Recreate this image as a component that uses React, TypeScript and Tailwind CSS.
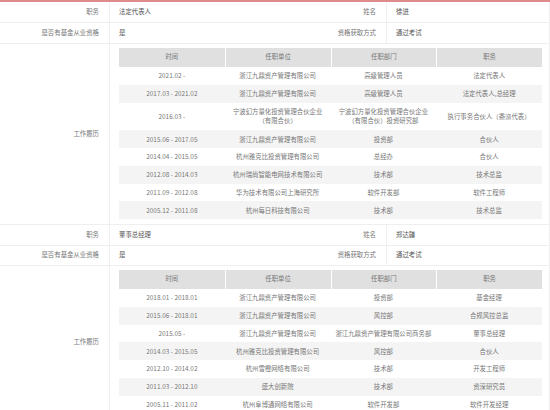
import React from "react";

type Row = { t: React.ReactNode; c: React.ReactNode; d: React.ReactNode; p: React.ReactNode; tall?: boolean };

const sec1: Row[] = [
  { t: "2021.02 -", c: "浙江九鼎资产管理有限公司", d: "高级管理人员", p: "法定代表人" },
  { t: "2017.03 - 2021.02", c: "浙江九鼎资产管理有限公司", d: "高级管理人员", p: "法定代表人,总经理" },
  {
    t: "2016.03 -",
    c: (<>宁波幻方量化投资管理合伙企业<br />（有限合伙）</>),
    d: (<>宁波幻方量化投资管理合伙企业<br />（有限合伙）投资研究部</>),
    p: "执行事务合伙人（委派代表）",
    tall: true,
  },
  { t: "2015.06 - 2017.05", c: "浙江九鼎资产管理有限公司", d: "投资部", p: "合伙人" },
  { t: "2014.04 - 2015.05", c: "杭州雅克比投资管理有限公司", d: "总经办", p: "合伙人" },
  { t: "2012.08 - 2014.03", c: "杭州瑞尚智能电网技术有限公司", d: "技术部", p: "技术总监" },
  { t: "2011.09 - 2012.08", c: "华为技术有限公司上海研究所", d: "软件开发部", p: "软件工程师" },
  { t: "2005.12 - 2011.08", c: "杭州每日科技有限公司", d: "技术部", p: "技术总监" },
];

const sec2: Row[] = [
  { t: "2018.01 - 2018.01", c: "浙江九鼎资产管理有限公司", d: "投资部", p: "基金经理" },
  { t: "2015.06 - 2018.01", c: "浙江九鼎资产管理有限公司", d: "风控部", p: "合规风控总监" },
  { t: "2015.05 -", c: "浙江九鼎资产管理有限公司", d: "浙江九鼎资产管理有限公司商务部", p: "董事总经理" },
  { t: "2014.03 - 2015.05", c: "杭州雅克比投资管理有限公司", d: "风控部", p: "合伙人" },
  { t: "2012.10 - 2014.02", c: "杭州雪橙网络有限公司", d: "技术部", p: "开发工程师" },
  { t: "2011.03 - 2012.10", c: "盛大创新院", d: "技术部", p: "资深研究员" },
  { t: "2005.11 - 2011.02", c: "杭州阜博通网络有限公司", d: "软件开发部", p: "软件开发经理" },
];

function Exp({ rows }: { rows: Row[] }) {
  return (
    <div className="flex flex-col text-[#777]">
      <div className="grid grid-cols-4 h-[19px] bg-[#e0e0e0]">
        {["时间", "任职单位", "任职部门", "职务"].map((h, i) => (
          <div key={i} className="flex items-center justify-center border-l border-white first:border-l-0">{h}</div>
        ))}
      </div>
      {rows.map((r, i) => (
        <div
          key={i}
          className={`grid grid-cols-4 ${r.tall ? "h-[27.75px]" : "h-[17.75px]"} ${i % 2 === 1 ? "bg-[#f4f4f4]" : "bg-white"}`}
        >
          {[r.t, r.c, r.d, r.p].map((v, j) => (
            <div key={j} className="flex items-center justify-center text-center leading-[9px] px-0.5 whitespace-nowrap">
              {v}
            </div>
          ))}
        </div>
      ))}
    </div>
  );
}

function Section({ duty, name, rows, first }: { duty: string; name: string; rows: Row[]; first?: boolean }) {
  const lab = "flex items-center justify-end pr-[10px] text-[#777] border-b border-r border-[#efefef]";
  const val = "flex items-center pl-[9px] text-[#555] border-b border-[#efefef]";
  const h = first ? "h-[21px]" : "h-[20.5px]";
  return (
    <div className="grid grid-cols-[110px_167px_110px_1fr]">
      <div className={`${lab} ${h}`}>职务</div>
      <div className={`${val} ${h}`}>{duty}</div>
      <div className={`${lab} ${h}`}>姓名</div>
      <div className={`${val} border-r ${h}`}>{name}</div>
      <div className={`${lab} ${h}`}>是否有基金从业资格</div>
      <div className={`${val} ${h}`}>是</div>
      <div className={`${lab} ${h}`}>资格获取方式</div>
      <div className={`${val} border-r ${h}`}>通过考试</div>
      <div className={lab}>工作履历</div>
      <div className="col-span-3 pl-[9px] pr-[7px] pt-[4px] pb-[5px] border-b border-r border-[#efefef]">
        <Exp rows={rows} />
      </div>
    </div>
  );
}

export default function App() {
  return (
    <div
      className="w-[550px] h-[410px] overflow-hidden bg-white text-[6.4px] leading-none"
      style={{ fontFamily: '"Noto Sans CJK SC", "Noto Sans", sans-serif' }}
    >
      <div className="border-t-2 border-[#df8a8c]">
        <Section duty="法定代表人" name="徐进" rows={sec1} first />
        <Section duty="董事总经理" name="郑达疆" rows={sec2} />
      </div>
    </div>
  );
}
